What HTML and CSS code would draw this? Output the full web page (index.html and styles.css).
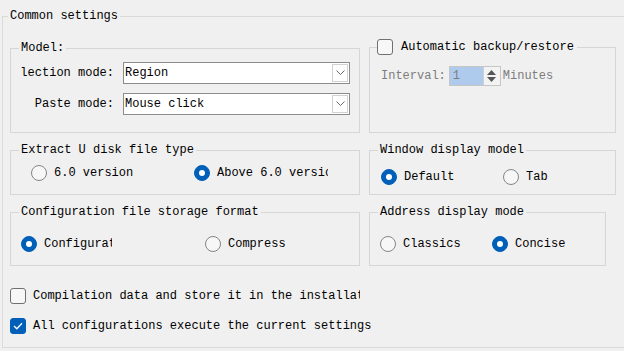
FILE: index.html
```html
<!DOCTYPE html>
<html lang="en">
<head>
    <meta charset="UTF-8">
    <meta name="viewport" content="width=device-width, initial-scale=1.0">
    <title>Common settings</title>
    <link rel="stylesheet" href="styles.css">
</head>
<body>
    <fieldset class="main">
        <legend>Common settings</legend>
        <div class="grid">
            <fieldset class="box model">
                <legend>Model:</legend>
                <div class="field">
                    <span class="label"><span>Selection mode:</span></span>
                    <div class="combo">
                        <span class="value">Region</span>
                        <span class="arrow"><svg width="9" height="6" viewBox="0 0 9 6"><path d="M0.5 0.5 L4.5 4.5 L8.5 0.5" fill="none" stroke="#6a6a6a" stroke-width="1"/></svg></span>
                    </div>
                </div>
                <div class="field">
                    <span class="label"><span>Paste mode:</span></span>
                    <div class="combo">
                        <span class="value">Mouse click</span>
                        <span class="arrow"><svg width="9" height="6" viewBox="0 0 9 6"><path d="M0.5 0.5 L4.5 4.5 L8.5 0.5" fill="none" stroke="#6a6a6a" stroke-width="1"/></svg></span>
                    </div>
                </div>
            </fieldset>

            <fieldset class="box backup">
                <legend class="check-legend"><span class="check"></span>Automatic backup/restore</legend>
                <div class="interval">
                    <span>Interval:</span>
                    <div class="spin">
                        <span class="spin-value">1</span>
                        <span class="spin-btns">
                            <svg width="9" height="5" viewBox="0 0 9 5"><path d="M4.5 0 L9 5 L0 5 Z" fill="#555"/></svg>
                            <svg width="9" height="5" viewBox="0 0 9 5"><path d="M0 0 L9 0 L4.5 5 Z" fill="#555"/></svg>
                        </span>
                    </div>
                    <span>Minutes</span>
                </div>
            </fieldset>

            <fieldset class="box extract">
                <legend>Extract U disk file type</legend>
                <div class="options">
                    <label class="option opt-a"><span class="radio"></span><span class="text">6.0 version</span></label>
                    <label class="option opt-b"><span class="radio on"></span><span class="text">Above 6.0 version</span></label>
                </div>
            </fieldset>

            <fieldset class="box window">
                <legend>Window display model</legend>
                <div class="options">
                    <label class="option opt-c"><span class="radio on"></span><span class="text">Default</span></label>
                    <label class="option"><span class="radio"></span><span class="text">Tab</span></label>
                </div>
            </fieldset>

            <fieldset class="box storage">
                <legend>Configuration file storage format</legend>
                <div class="options">
                    <label class="option opt-d"><span class="radio on"></span><span class="text">Configuration file</span></label>
                    <label class="option"><span class="radio"></span><span class="text">Compress</span></label>
                </div>
            </fieldset>

            <fieldset class="box address">
                <legend>Address display mode</legend>
                <div class="options">
                    <label class="option opt-e"><span class="radio"></span><span class="text">Classics</span></label>
                    <label class="option"><span class="radio on"></span><span class="text">Concise</span></label>
                </div>
            </fieldset>
        </div>

        <div class="checks">
            <label class="check-row"><span class="check"></span><span class="text clip">Compilation data and store it in the installation directory</span></label>
            <label class="check-row"><span class="check on"><svg width="10" height="8" viewBox="0 0 10 8"><path d="M1 4 L3.8 6.8 L9 1.2" fill="none" stroke="#fff" stroke-width="1.3"/></svg></span><span class="text">All configurations execute the current settings</span></label>
        </div>
    </fieldset>
</body>
</html>
```

FILE: styles.css
```css
body {
    margin: 0;
    background-color: #f0f0f0;
    font-family: "Liberation Mono", "DejaVu Sans Mono", monospace;
    font-size: 12px;
    line-height: 14px;
    color: #000;
    overflow: hidden;
}
fieldset {
    margin: 0;
    min-width: 0;
    box-sizing: border-box;
}
legend {
    padding: 0 2px;
    margin-left: -2px;
    line-height: 14px;
}
.main {
    width: 622px;
    margin: 9px 0 0 2px;
    padding: 18px 0 13px 7px;
    border: 1px solid #dadada;
    border-right: none;
}
.grid {
    display: grid;
    grid-template-columns: 350px 247px;
    grid-template-rows: 92px 52px 61px;
    column-gap: 9px;
    row-gap: 10px;
}
.box {
    border: 1px solid #d6d6d6;
    padding: 0 9px 0 10px;
}

/* model */
.model {
    padding-top: 7px;
    display: flex;
    flex-direction: column;
    gap: 9px;
}
.field {
    display: flex;
    align-items: center;
    gap: 9px;
}
.label {
    width: 93px;
    display: flex;
    justify-content: flex-end;
    overflow: hidden;
    white-space: nowrap;
}
.label span {
    flex: none;
}
.combo {
    width: 227px;
    height: 22px;
    box-sizing: border-box;
    border: 1px solid #8c8c8c;
    background-color: #fff;
    display: flex;
    align-items: center;
    justify-content: space-between;
    padding: 0 1px 0 1px;
}
.arrow {
    width: 16px;
    height: 18px;
    box-sizing: border-box;
    border: 1px solid #d2d2d2;
    display: flex;
    align-items: center;
    justify-content: center;
}

/* backup */
.backup {
    margin-top: -2px;
    padding-top: 11px;
}
.check-legend {
    display: flex;
    align-items: center;
    gap: 8px;
    line-height: 16px;
    margin-left: -3px;
    padding: 0 3px 0 0;
}
.interval {
    display: flex;
    align-items: center;
    color: #7d7d7d;
    margin-left: 1px;
}
.spin {
    width: 52px;
    height: 20px;
    box-sizing: border-box;
    border: 1px solid #c6c6c6;
    margin: 0 2px 0 3px;
    display: flex;
}
.spin-value {
    flex: 1;
    background-color: #aecbee;
    padding-left: 3px;
    line-height: 18px;
}
.spin-btns {
    width: 16px;
    background-color: #f3f3f3;
    border-left: 1px solid #d0d0d0;
    display: flex;
    flex-direction: column;
    align-items: center;
    justify-content: center;
    gap: 2px;
}

/* radio groups */
.options {
    display: flex;
    align-items: center;
}
.extract {
    padding-top: 8px;
}
.window {
    padding-top: 12px;
}
.storage, .address {
    padding-top: 17px;
}
.address {
    width: 237px;
}
.option {
    display: flex;
    align-items: center;
    gap: 7px;
    white-space: nowrap;
}
.option .text {
    overflow: hidden;
}
.opt-a {
    margin-left: 10px;
    width: 163px;
}
.opt-b .text {
    width: 111px;
}
.opt-c {
    margin-left: 1px;
    width: 122px;
}
.opt-d {
    width: 184px;
}
.opt-d .text {
    width: 68px;
}
.opt-e {
    width: 112px;
}
.radio {
    width: 16px;
    height: 16px;
    box-sizing: border-box;
    border-radius: 50%;
    border: 1px solid #858585;
    background-color: #f7f7f7;
    flex: none;
    display: flex;
    align-items: center;
    justify-content: center;
}
.radio.on {
    background-color: #005fb8;
    border-color: #005fb8;
}
.radio.on::after {
    content: "";
    width: 6px;
    height: 6px;
    border-radius: 50%;
    background-color: #fff;
}

/* checkboxes */
.check {
    width: 16px;
    height: 16px;
    box-sizing: border-box;
    border: 1px solid #707070;
    border-radius: 3px;
    background-color: #f7f7f7;
    flex: none;
    display: flex;
    align-items: center;
    justify-content: center;
}
.check.on {
    background-color: #005fb8;
    border-color: #005fb8;
}
.checks {
    margin-top: 22px;
    display: flex;
    flex-direction: column;
    gap: 14px;
}
.check-row {
    display: flex;
    align-items: center;
    gap: 7px;
    white-space: nowrap;
}
.check-row .clip {
    width: 327px;
    overflow: hidden;
}
```
